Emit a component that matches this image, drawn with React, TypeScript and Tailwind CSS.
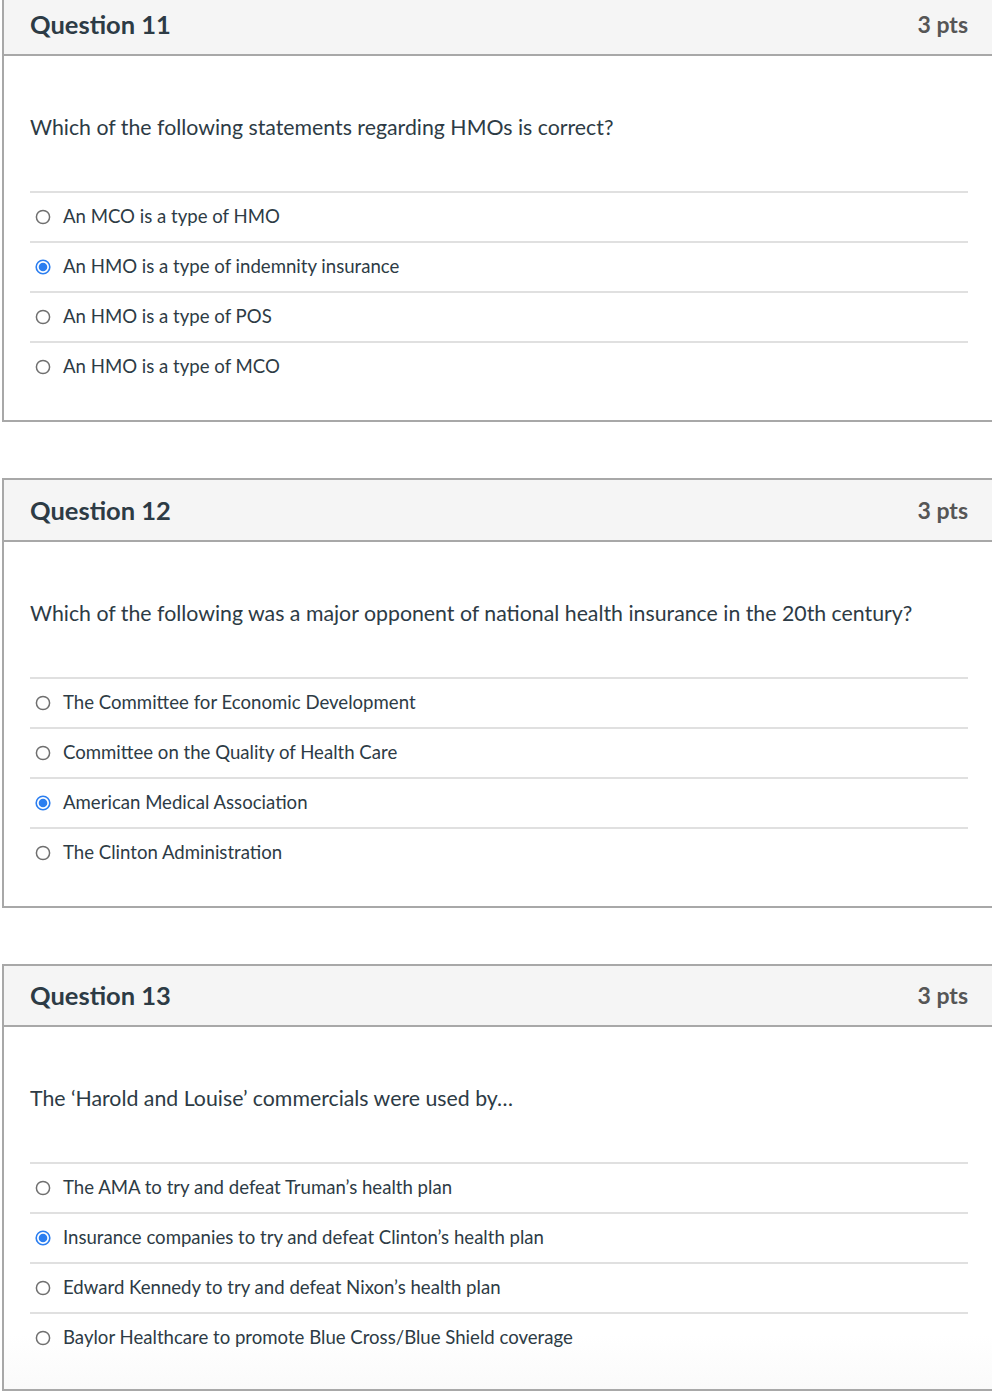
import React from "react";

type Q = { n: number; text: string; answers: string[]; sel: number };

const questions: Q[] = [
  {
    n: 11,
    text: "Which of the following statements regarding HMOs is correct?",
    answers: [
      "An MCO is a type of HMO",
      "An HMO is a type of indemnity insurance",
      "An HMO is a type of POS",
      "An HMO is a type of MCO",
    ],
    sel: 1,
  },
  {
    n: 12,
    text: "Which of the following was a major opponent of national health insurance in the 20th century?",
    answers: [
      "The Committee for Economic Development",
      "Committee on the Quality of Health Care",
      "American Medical Association",
      "The Clinton Administration",
    ],
    sel: 2,
  },
  {
    n: 13,
    text: "The \u2018Harold and Louise\u2019 commercials were used by\u2026",
    answers: [
      "The AMA to try and defeat Truman\u2019s health plan",
      "Insurance companies to try and defeat Clinton\u2019s health plan",
      "Edward Kennedy to try and defeat Nixon\u2019s health plan",
      "Baylor Healthcare to promote Blue Cross/Blue Shield coverage",
    ],
    sel: 1,
  },
];

function Radio({ checked }: { checked: boolean }) {
  return checked ? (
    <svg width="16" height="16" viewBox="0 0 16 16" className="shrink-0">
      <circle cx="8" cy="8" r="6.8" fill="#fff" stroke="#2b7ef0" strokeWidth="1.6" />
      <circle cx="8" cy="8" r="4.3" fill="#2b7ef0" />
    </svg>
  ) : (
    <svg width="16" height="16" viewBox="0 0 16 16" className="shrink-0">
      <circle cx="8" cy="8" r="6.6" fill="#fff" stroke="#6f6f6f" strokeWidth="1.5" />
    </svg>
  );
}

function Card({ q, last }: { q: Q; last: boolean }) {
  return (
    <div className="w-[994px] border-2 border-[#a8a8a8] bg-white">
      <div
        className={
          (last ? "h-[61px] " : "h-[62px] ") +
          "flex items-center justify-between bg-[#f5f5f5] border-b-2 border-[#a8a8a8] pl-[26px] pr-[26px]"
        }
      >
        <span className="text-[25.5px] font-bold text-[#2d3b45]">
          Question {q.n}
        </span>
        <span className="text-[23px] font-bold text-[#565656]">3 pts</span>
      </div>
      <div
        className={
          (last ? "pb-[27px] bg-gradient-to-b from-white from-85% to-[#fafafa] " : "pb-[29px] ") +
          "px-[26px] pt-[57px]"
        }
      >
        <div className="text-[21.3px] leading-[28px] text-[#2d3b45] mb-[50px]">{q.text}</div>
        <div>
          {q.answers.map((a, i) => (
            <div
              key={i}
              className="h-[50px] border-t-2 border-[#e0e0e0] flex items-center gap-[12px] pl-[5px] text-[18.6px] text-[#2d3b45]"
            >
              <Radio checked={i === q.sel} />
              <span>{a}</span>
            </div>
          ))}
        </div>
      </div>
    </div>
  );
}

export default function App() {
  return (
    <div
      className="w-[992px] h-[1392px] overflow-hidden bg-white"
      style={{ fontFamily: "Lato, 'Open Sans', sans-serif" }}
    >
      <div className="-mt-[8px] ml-[2px] flex flex-col gap-[56px]">
        {questions.map((q, i) => (
          <Card key={q.n} q={q} last={i === questions.length - 1} />
        ))}
      </div>
    </div>
  );
}
